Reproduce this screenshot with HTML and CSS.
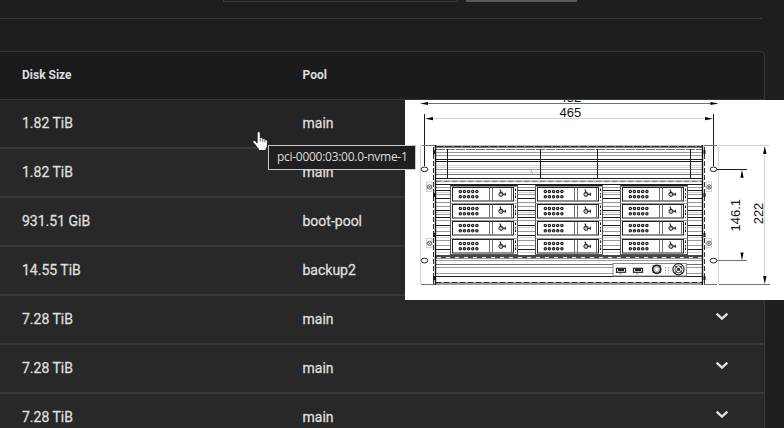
FILE: index.html
```
<!DOCTYPE html>
<html lang="en">
<head>
<meta charset="utf-8">
<title>Disks</title>
<link rel="stylesheet" href="styles.css">
</head>
<body>
<div class="toolbar"><div class="search"></div><div class="button"></div></div>
<main class="content">
  <div class="table">
    <div class="row head"><span>Disk Size</span><span>Pool</span></div>
    <div class="row hovered"><span>1.82 TiB</span><span>main</span></div>
    <div class="row"><span>1.82 TiB</span><span>main</span></div>
    <div class="row"><span>931.51 GiB</span><span>boot-pool</span></div>
    <div class="row"><span>14.55 TiB</span><span>backup2</span></div>
    <div class="row"><span>7.28 TiB</span><span>main</span><svg class="chevron" viewBox="0 0 14 9"><path d="M1.6 1.6 7 6.6l5.4-5"/></svg></div>
    <div class="row"><span>7.28 TiB</span><span>main</span><svg class="chevron" viewBox="0 0 14 9"><path d="M1.6 1.6 7 6.6l5.4-5"/></svg></div>
    <div class="row last"><span>7.28 TiB</span><span>main</span><svg class="chevron" viewBox="0 0 14 9"><path d="M1.6 1.6 7 6.6l5.4-5"/></svg></div>
  </div>
</main>

<svg class="drawing" viewBox="405 100 379 200">
  <defs>
    <g id="latch">
      <circle cx="501" cy="8.3" r="2.1" fill="#ccc" stroke="#222" stroke-width="1"/>
      <path d="M500 3.5l1.3 4M502 8.3h4M505.3 6.8v3" stroke="#222" stroke-width="1.1" fill="none"/>
    </g>
    <g id="bay">
      <path class="grey" d="M450.5 .5h67"/>
      <rect x="452.5" y="1.5" width="61" height="13.5" fill="#fff" stroke="#222"/>
      <path class="mid" d="M489.5 1.5v13.5M492.5 1.5v13.5M511.5 2v13"/>
      <g class="vent">
        <circle cx="460.3" cy="5.4" r="1.2"/><circle cx="464.4" cy="5.4" r="1.2"/><circle cx="468.6" cy="5.4" r="1.2"/><circle cx="472.7" cy="5.4" r="1.2"/><circle cx="476.9" cy="5.4" r="1.2"/>
        <circle cx="460.3" cy="10.8" r="1.2"/><circle cx="464.4" cy="10.8" r="1.2"/><circle cx="468.6" cy="10.8" r="1.2"/><circle cx="472.7" cy="10.8" r="1.2"/><circle cx="476.9" cy="10.8" r="1.2"/>
      </g>
      <use href="#latch"/>
      <path class="dark" d="M515.5 2.5v12" stroke-dasharray="2.5 2 1.5 1"/>
    </g>
    <g id="cage">
      <rect x="450.5" y="185.5" width="67" height="69" fill="#fff" stroke="#555"/>
      <path class="dark" d="M451 185.5h66"/>
      <use href="#bay" y="186"/><use href="#bay" y="203"/><use href="#bay" y="220"/><use href="#bay" y="238"/>
    </g>
    <g id="screw">
      <rect x="-3" y="-5" width="5.5" height="9.5" fill="#fff" stroke="#bbb" stroke-width=".7"/>
      <circle r="2.2" fill="#fff" stroke="#444" stroke-width=".8"/><path d="M-1.3-1.3l2.6 2.6M1.3-1.3l-2.6 2.6" stroke="#444" stroke-width=".7"/>
    </g>
  </defs>
  <rect x="405" y="100" width="379" height="200" fill="#fff"/>

  <!-- width dimensions -->
  <path class="mid" d="M426 103.5h286"/>
  <path class="light" d="M430 118.5h278"/>
  <path class="ink" d="M420 103.5l8-1.6v3.2zM718.5 103.5l-8-1.6v3.2zM425 118.7l8-1.6v3.2zM713 118.7l-8-1.6v3.2z"/>
  <path class="dark" d="M424.5 114v52M713.5 114v52"/>
  <text x="570.3" y="102">482</text>
  <text x="570.3" y="117">465</text>

  <!-- mounting ears -->
  <path class="light" d="M436 145.5h-14q-1.5 0-1.5 2v135q0 2 2 2M718.5 147v137"/>
  <path class="mid" d="M422 145.5h13M421 284.5h15M704 145.5h13M704 284.5h13"/>
  <g fill="#fff" stroke="#222"><ellipse cx="424.5" cy="169.3" rx="3.3" ry="2.3"/><ellipse cx="424.5" cy="260.6" rx="3.3" ry="2.4"/><ellipse cx="713.5" cy="169.3" rx="3.3" ry="2.3"/><ellipse cx="713.5" cy="260.6" rx="3.3" ry="2.4"/></g>
  <use href="#screw" x="429.5" y="187"/><use href="#screw" x="429.5" y="243.3"/><use href="#screw" x="709" y="187"/><use href="#screw" x="709" y="243.3"/>

  <!-- top grille -->
  <rect x="435" y="145.5" width="268" height="2.5" fill="#777"/>
  <path d="M436 146.5h267" stroke="#333" stroke-dasharray="7 2"/>
  <path class="mid" d="M436 149.5h267" stroke-dasharray="9 1"/>
  <path class="grey" d="M436 152.5h267M436 155.5h267M436 169.5h267" />
  <path class="dark" d="M436 159.5h267M436 161.5h267M436 178.5h267"/>
  <path class="light" d="M436 165.5h267M436 167.5h267M436 172.5h267"/>
  <path class="mid" d="M436 174.5h267"/>
  <path class="dark" d="M447.5 149v29M540.5 149v29M597.5 149v29M690.5 149v29"/>
  <path d="M529.5 169q2 0 2 2.5l1 2" class="grey"/>
  <path d="M436 181.3h267" stroke="#bbb" stroke-width="2"/>
  <path d="M436 181.3h267" stroke="#777" stroke-dasharray="5 3"/>
  <path class="dark" d="M436 184.5h267"/>

  <!-- body ribs behind the cages -->
  <path class="grey" d="M436 187.5h267M436 194.5h267M436 202.5h267M436 206.5h267M436 214.5h267M436 220.5h267M436 231.5h267M436 240.5h267M436 245.5h267"/>
  <path class="dark" d="M436 190.5h267M436 198.5h267M436 210.5h267M436 217.5h267M436 225.5h267M436 235.5h267M436 249.5h267"/>
  <path class="light" d="M436 192.5h267M436 212.5h267M436 227.5h267M436 237.5h267M436 252.5h267"/>
  <use href="#cage"/><use href="#cage" x="85"/><use href="#cage" x="170"/>

  <!-- lower rail -->
  <rect x="436" y="255" width="267" height="3.6" fill="#484448"/>
  <path d="M437 257.5h265" stroke="#eee" stroke-dasharray="4 5"/>
  <path class="grey" d="M436 260.5h267M436 267.5h267M436 273.5h267"/>
  <path class="mid" d="M436 264.5h267"/>
  <path class="dark" d="M436 276.5h267"/>
  <rect x="436" y="282" width="267" height="3" fill="#999"/>
  <path d="M436 282.5h267" stroke="#222" stroke-dasharray="5 3"/>
  <path d="M435.5 145v140M702.5 145v140" stroke="#111" stroke-width="1.4"/>
  <path d="M433.5 147v137M704.5 147v137" stroke="#333" stroke-dasharray="5 2"/>
  <path class="dark" d="M434 150v4M434 193v4M434 233v4M434 276v4M704.5 150v4M704.5 193v4M704.5 233v4M704.5 276v4" stroke-width="2"/>

  <!-- front ports -->
  <rect x="613" y="263.5" width="73.5" height="12.5" fill="#fff" stroke="#888"/>
  <g fill="#fff" stroke="#222" stroke-width="1.2"><rect x="616.5" y="268.3" width="9" height="4"/><rect x="633.5" y="268.3" width="9" height="4"/></g>
  <path d="M618 270h6M635 270h6" stroke="#222" stroke-width="1.8"/>
  <path d="M619 274h3M636 274h3" stroke="#aaa"/>
  <circle cx="656.7" cy="269.3" r="4" fill="#fff" stroke="#222" stroke-width="1.8"/><circle cx="656.7" cy="269.3" r="2.3" fill="none" stroke="#888" stroke-width=".7"/>
  <path d="M652.5 265.5l2 1M661 265.5l-2 1M652.5 273l2-1M661 273l-2-1" stroke="#222"/>
  <path d="M665.5 267.5v6M668.5 267.5v6" stroke="#777" stroke-dasharray="1 1.6"/>
  <circle cx="678.5" cy="269.3" r="5.6" fill="#fff" stroke="#222" stroke-width="1.2"/><circle cx="678.5" cy="269.3" r="3.5" fill="none" stroke="#333" stroke-width=".9"/><circle cx="678.5" cy="269.3" r="1.5" fill="#222"/>
  <path d="M674.5 265.3l8 8M682.5 265.3l-8 8" stroke="#333" stroke-width=".9"/>

  <!-- height dimensions -->
  <path class="dark" d="M717 169.5h30"/>
  <path class="mid" d="M717 260.5h30M719 284.5h51"/>
  <path class="light" d="M719 145.5h51M764.5 150v130"/>
  <path class="ink" d="M742 169.8l1.6 8h-3.2zM742 260.4l1.6-8h-3.2zM764.8 146l1.7 8h-3.4zM764.8 284l1.7-8h-3.4z"/>
  <text transform="translate(740.3 215.2) rotate(-90)">146.1</text>
  <text transform="translate(763.2 213.5) rotate(-90)">222</text>
</svg>

<div class="tooltip">pci-0000:03:00.0-nvme-1</div>
<svg class="cursor" viewBox="0 0 16 20"><path d="M5.2 2.2q0-1.7 1.5-1.7t1.5 1.7v4.6q1.9-.6 2.5.8 1.7-.5 2.2.9 2.5-.4 2.5 1.6v4q0 2-1.3 3.4v2H6.4v-1.8q-2-1.7-2.9-3.7L.9 11.3q-.5-1.8 1-2 1 0 3.3 2.6z"/><path class="fingers" d="M8.2 7.5v3M10.7 8v2.8M12.9 8.8v2.3"/></svg>
</body>
</html>
```
FILE: styles.css
```
* { box-sizing: border-box; }
body {
  position: relative;
  margin: 0;
  width: 784px;
  height: 428px;
  overflow: hidden;
  background: #1e1e1e;
  color: #dedede;
  font-family: Roboto, sans-serif;
}
.toolbar {
  display: flex;
  gap: 8px;
  width: 762px;
  height: 19px;
  padding-left: 223px;
  border-bottom: 1px solid #383838;
}
.search {
  width: 235px;
  height: 2px;
  border: 1px solid #3b3b3b;
  border-top: 0;
}
.button { width: 111px; height: 2px; background: #5a5a5a; }
.content { padding-top: 32px; }
.table {
  width: 765px;
  height: 377px;
  border: 1px solid #383838;
  border-width: 1px 1px 0 0;
  border-top-right-radius: 5px;
  overflow: hidden;
}
.row {
  display: grid;
  grid-template-columns: 280.5px 412.5px 14px;
  align-items: center;
  height: 49px;
  padding: 0 0 2px 22px;
  background: #282828;
  border-bottom: 2px solid #383838;
  font-size: 14px;
  font-weight: 400;
  -webkit-text-stroke: .3px #dedede;
}
.row.last { height: 34px; padding: 15px 0 0 22px; align-items: start; border-bottom: 0; }
.row.head {
  height: 48px;
  background: #1b1b1b;
  border-bottom-width: 1px;
  font-size: 12px;
  font-weight: 700;
  -webkit-text-stroke: 0;
}
.row.hovered { background: #242424; }
.chevron {
  width: 14px;
  height: 9px;
  margin-top: -5px;
  fill: none;
  stroke: #dedede;
  stroke-width: 2.4;
}
.row.last .chevron { margin-top: 1px; }
.drawing {
  position: absolute;
  left: 405px;
  top: 100px;
  width: 379px;
  height: 200px;
}
.drawing text {
  font: 13px "Liberation Sans", sans-serif;
  fill: #111;
  text-anchor: middle;
}
.dark { stroke: #1c1c1c; fill: none; }
.mid { stroke: #707070; fill: none; }
.grey { stroke: #999; fill: none; }
.light { stroke: #d4d4d4; fill: none; }
.ink { fill: #000; }
.vent { fill: #bbb; stroke: #1a1a1a; stroke-width: 1.1; }
.tooltip {
  position: absolute;
  left: 268px;
  top: 145px;
  width: 148px;
  height: 25px;
  padding-left: 8px;
  background: #1f1f1f;
  border: 1px solid #c8c8c8;
  font: 12px/22px "Open Sans", sans-serif;
  letter-spacing: -.28px;
  white-space: nowrap;
}
.cursor {
  position: absolute;
  left: 252px;
  top: 131px;
  width: 16px;
  height: 20px;
  fill: #fff;
  stroke: #111;
  stroke-width: .8;
}
.fingers { fill: none; stroke-width: .7; }
```
